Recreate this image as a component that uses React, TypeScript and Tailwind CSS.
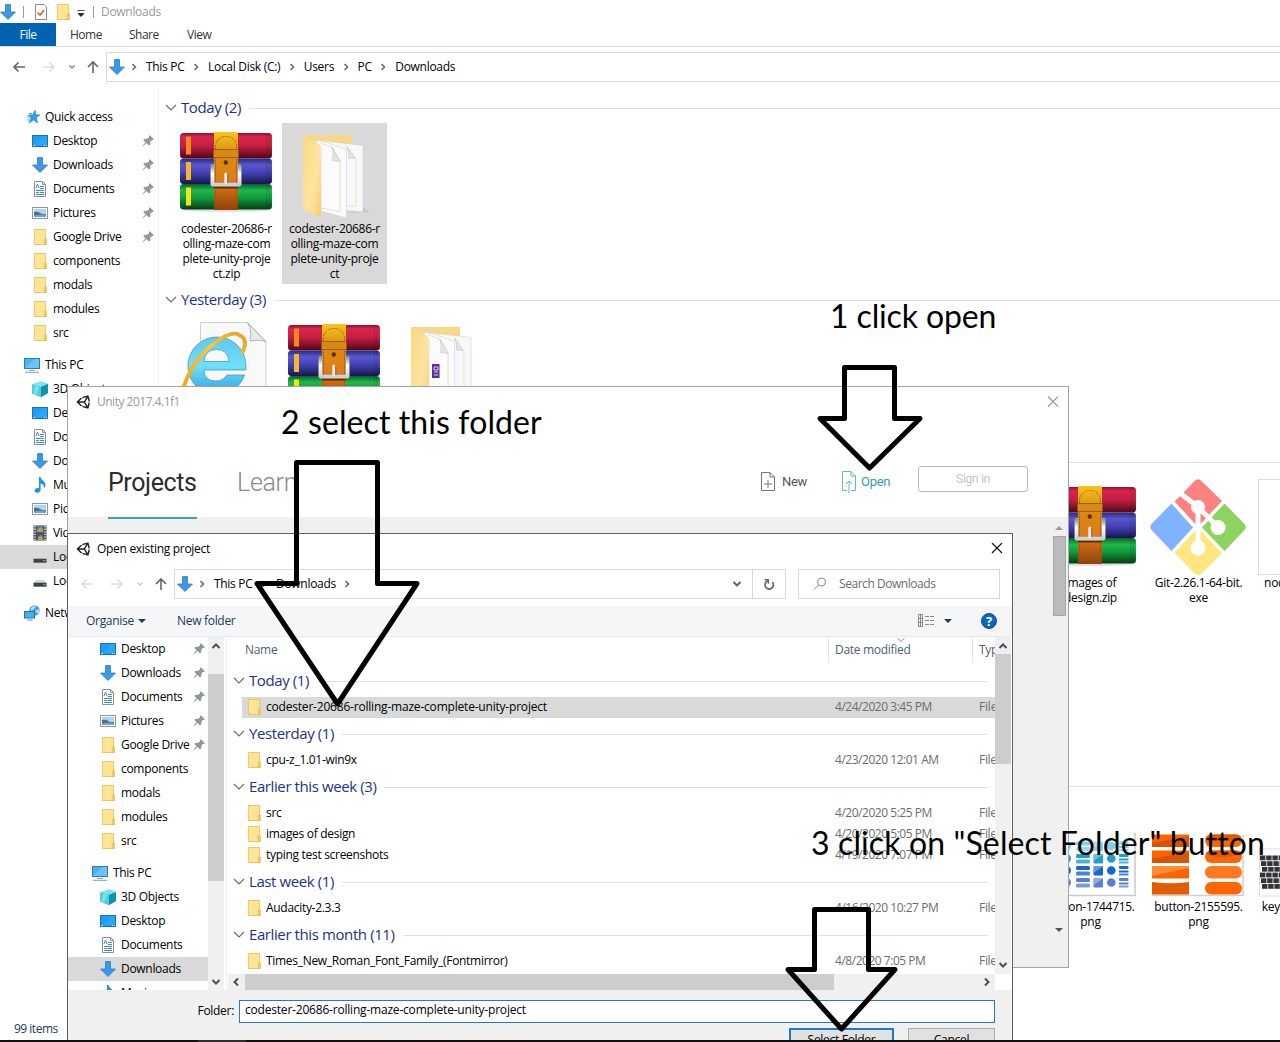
import React from "react";
import { FaUnity } from "react-icons/fa";

type IconName = "desktop" | "down" | "doc" | "pic" | "folder" | "pc" | "cube" | "music" | "video" | "drive" | "net" | "star";

function Icon({ name }: { name: IconName }) {
  const base = "block h-4 w-4 shrink-0";
  switch (name) {
    case "desktop":
      return (
        <svg className={base} viewBox="0 0 16 16">
          <rect x=".5" y="2.5" width="15" height="11" fill="#1e9bf5" stroke="#1873bd" />
          <path d="M1 13L11 3H15V12H1Z" fill="#35adff" opacity=".6" />
          <path d="M1.500 12.500H3M12 12.500h1M14 12.500h1" stroke="#d8efff" />
        </svg>
      );
    case "down":
      return (
        <svg className={base} viewBox="0 0 16 16">
          <path d="M5.500 .5h5v7.500h5L8 15.500.5 8h5Z" fill="#3b98e4" stroke="#2d7cc4" strokeWidth=".8" />
        </svg>
      );
    case "doc":
      return (
        <svg className={base} viewBox="0 0 16 16">
          <path d="M2.500 .5h8l3 3v12h-11Z" fill="#fff" stroke="#8b8f94" />
          <path d="M10.500 .5v3h3" fill="none" stroke="#8b8f94" />
          <path d="M4 7L5.500 3 7 7M8 5.500h4M8 7.500h4M4 9.500h8M4 11.500h3M8 11.500h4M4 13.500h8" stroke="#3c87c7" fill="none" />
        </svg>
      );
    case "pic":
      return (
        <svg className={base} viewBox="0 0 16 16">
          <rect x=".5" y="2.500" width="15" height="11" fill="#fff" stroke="#8f979e" />
          <rect x="2" y="4" width="12" height="8" fill="#a9d4f2" />
          <path d="M2 7q4-1 6 1t6 1v3H2Z" fill="#47708a" />
          <path d="M2 10.500q6-1.500 12 0V12H2Z" fill="#6fa9cf" />
        </svg>
      );
    case "folder":
      return (
        <svg className={base} viewBox="0 0 16 16">
          <path d="M2.400 .5h11.200v9.500h.6v5.500H2.400Z" fill="#fee596" stroke="#e6c35c" strokeWidth=".9" />
          <path d="M12.300 10.200h1.800v5.300h-1.800Z" fill="#fbd667" stroke="#dfb545" strokeWidth=".7" />
        </svg>
      );
    case "pc":
      return (
        <svg className={base} viewBox="0 0 16 16">
          <rect x=".5" y="1.500" width="15" height="10" fill="#49b2f3" stroke="#2d7cad" />
          <path d="M1 11L11 2h4v9Z" fill="#83cffc" opacity=".6" />
          <path d="M5 13.500h6" stroke="#9aabb5" />
          <path d="M1 15.300h14" stroke="#8d9aa3" />
        </svg>
      );
    case "cube":
      return (
        <svg className={base} viewBox="0 0 16 16">
          <path d="M0 3.500L9 .5l7 2.500v9l-7 4-9-3.500Z" fill="#2bb6cd" />
          <path d="M0 3.500L9 .5 16 3 9 6Z" fill="#83e4ee" />
          <path d="M0 3.500L9 6v10L0 12.500Z" fill="#4fd0de" />
          <path d="M9 6l7-3v9l-7 4Z" fill="#0c93ad" />
          <path d="M3 5l4 1-3 8-2-1Z" fill="#9cebf2" opacity=".6" />
        </svg>
      );
    case "music":
      return (
        <svg className={base} viewBox="0 0 16 16">
          <path d="M7 0h1.600c0 3 4.800 4 4.800 7.500 0 1.500-.6 3-1.500 4 .5-3-1.200-4.500-3.300-5V13c0 1.600-1.500 2.800-3.200 2.800S2.600 15 2.600 13.600s1.400-2.600 3-2.600c.6 0 1 .1 1.400.3Z" fill="#1c93df" />
        </svg>
      );
    case "video":
      return (
        <svg className={base} viewBox="0 0 16 16">
          <rect x="1.500" y=".5" width="13" height="15" fill="#444a50" />
          <path d="M3 1v14M13 1v14" stroke="#fff" strokeWidth="1.300" strokeDasharray="1.300 1.300" />
          <rect x="4.500" y="1" width="7" height="6.500" fill="#3f79c4" />
          <rect x="4.500" y="8.500" width="7" height="6.500" fill="#33599b" />
          <path d="M5 5l3-3 3 2v3H5ZM6 12l3-2 2 3v2H6Z" fill="#c69a33" />
        </svg>
      );
    case "drive":
      return (
        <svg className={base} viewBox="0 0 16 16">
          <path d="M4 7h8l2.500 3h-13Z" fill="#d6dadc" />
          <rect x="1.500" y="9.700" width="13" height="4" fill="#3c4347" />
          <rect x="11.500" y="11" width="1.700" height="1.200" fill="#5ce05b" />
        </svg>
      );
    case "net":
      return (
        <svg className={base} viewBox="0 0 16 16">
          <circle cx="10.500" cy="5.500" r="5.200" fill="#4d9fd4" />
          <path d="M7 3q3-3 5-2l-2 3-3 2ZM11 6l4-2q1 3-1 5Z" fill="#b8dcee" />
          <rect x=".5" y="6.500" width="10" height="6.500" fill="#45b1f3" stroke="#2372a5" />
          <path d="M3.500 15h5" stroke="#5f8fae" />
        </svg>
      );
    case "star":
      return (
        <svg className={base} viewBox="0 0 16 16">
          <path d="M11 1.200l.9 4.500 4 .2-3.500 2.700 1.100 5.300-3.900-3-4.500 3.200 1.900-5.300L4.500 6l4.300-.3Z" fill="#2da1ee" stroke="#1c7fc8" strokeWidth=".6" />
          <path d="M5 4.500h3M2.500 8h3.500M3 11h2.500" stroke="#4aaef0" />
        </svg>
      );
  }
}

function Pin() {
  return (
    <svg className="block h-3 w-3 shrink-0" viewBox="0 0 12 12">
      <path d="M7.500 0L12 4.300l-1.300.6-.5-.2-2 2.100.1 2.400-1.300 1.300L4.500 8 .8 11.600.3 11.200 3.600 7.200 1.300 4.900l1.400-1.200 2.300.2 2.200-2L7 1.200Z" fill="#8e979f" />
    </svg>
  );
}

type NavItem = { icon: IconName; label: string; pin?: boolean; root?: boolean; on?: boolean; gap?: boolean };

const mainNav: NavItem[] = [
  { icon: "star", label: "Quick access", root: true },
  { icon: "desktop", label: "Desktop", pin: true },
  { icon: "down", label: "Downloads", pin: true },
  { icon: "doc", label: "Documents", pin: true },
  { icon: "pic", label: "Pictures", pin: true },
  { icon: "folder", label: "Google Drive", pin: true },
  { icon: "folder", label: "components" },
  { icon: "folder", label: "modals" },
  { icon: "folder", label: "modules" },
  { icon: "folder", label: "src" },
  { icon: "pc", label: "This PC", root: true, gap: true },
  { icon: "cube", label: "3D Objects" },
  { icon: "desktop", label: "Desktop" },
  { icon: "doc", label: "Documents" },
  { icon: "down", label: "Downloads" },
  { icon: "music", label: "Music" },
  { icon: "pic", label: "Pictures" },
  { icon: "video", label: "Videos" },
  { icon: "drive", label: "Local Disk (C:)", on: true },
  { icon: "drive", label: "Local Disk (D:)" },
  { icon: "net", label: "Network", root: true, gap: true },
];

const dialogNav: NavItem[] = [
  ...mainNav.slice(1, 14),
  { icon: "down", label: "Downloads", on: true },
  { icon: "music", label: "Music" },
];

function Nav({ items, dialog }: { items: NavItem[]; dialog?: boolean }) {
  return (
    <div className="flex flex-col">
      {items.map((n, i) => (
        <div
          key={i}
          className={
            "flex h-6 shrink-0 items-center " +
            (n.gap ? "mt-2 " : "") +
            (n.on ? "bg-[#d9d9d9] " : "") +
            (dialog ? "pr-[3px] " : "pr-1 ") +
            (n.root ? "pl-6" : "pl-8")
          }
        >
          <Icon name={n.icon} />
          <span className="ml-[5px] flex-1 whitespace-nowrap">{n.label}</span>
          {n.pin && <Pin />}
        </div>
      ))}
    </div>
  );
}

function Chevron({ className, d = "M1 3l5 5 5-5", w = 1.2 }: { className: string; d?: string; w?: number }) {
  return (
    <svg className={"block h-3 w-3 shrink-0 " + className} viewBox="0 0 12 12" fill="none" stroke="currentColor" strokeWidth={w}>
      <path d={d} />
    </svg>
  );
}
const RIGHT = "M4.500 3l3 3-3 3";
const DOWN = "M2.500 4l3.500 3.500L9.500 4";
const UP = "M2.500 8L6 4.500 9.500 8";

function GroupHeader({ label, className }: { label: string; className: string }) {
  return (
    <div className={"flex shrink-0 items-center " + className}>
      <Chevron className="text-[#6d6d6d]" />
      <span className="ml-1 pb-0.5 text-[15px] leading-5 tracking-[-0.4px] whitespace-nowrap text-[#1e3287]">{label}</span>
      <span className="ml-[8px] h-px flex-1 bg-[#e2e2e2]" />
    </div>
  );
}

function WinRar() {
  const books = [
    { y: 8, c: "url(#wr-red)", s: "#f5871f" },
    { y: 33.500, c: "url(#wr-blue)", s: "#f5b52c" },
    { y: 59, c: "url(#wr-green)", s: "#f2e51c" },
  ];
  return (
    <svg className="block h-24 w-24" viewBox="0 0 96 96">
      <defs>
        <linearGradient id="wr-red" x2="0" y2="1">
          <stop offset="0" stopColor="#8d1230" /><stop offset=".15" stopColor="#d8264c" /><stop offset=".5" stopColor="#c41f43" /><stop offset="1" stopColor="#4f0717" />
        </linearGradient>
        <linearGradient id="wr-blue" x2="0" y2="1">
          <stop offset="0" stopColor="#2a2a78" /><stop offset=".25" stopColor="#5957cf" /><stop offset=".55" stopColor="#4442b5" /><stop offset="1" stopColor="#17164d" />
        </linearGradient>
        <linearGradient id="wr-green" x2="0" y2="1">
          <stop offset="0" stopColor="#0a6125" /><stop offset=".25" stopColor="#20b74d" /><stop offset=".55" stopColor="#119a3a" /><stop offset="1" stopColor="#033d13" />
        </linearGradient>
        <linearGradient id="wr-belt" x2="0" y2="1">
          <stop offset="0" stopColor="#f7c51e" /><stop offset=".28" stopColor="#d98d10" /><stop offset=".65" stopColor="#e07a16" /><stop offset="1" stopColor="#8e420a" />
        </linearGradient>
        <linearGradient id="wr-metal" x2="0" y2="1">
          <stop offset="0" stopColor="#9a9a9a" /><stop offset=".4" stopColor="#fff" /><stop offset="1" stopColor="#cfcfcf" />
        </linearGradient>
      </defs>
      <ellipse cx="48" cy="85" rx="44" ry="2" fill="#ccc" opacity=".6" />
      {books.map((b) => (
        <g key={b.y}>
          <rect x="2" y={b.y} width="92" height="25.500" rx="3.500" fill={b.c} />
          <rect x="8" y={b.y + 3.500} width="5" height="18" fill={b.s} />
          <path d={`M88.500 ${b.y + 1}v23M91 ${b.y + 1}v23`} stroke="#000" opacity=".15" />
        </g>
      ))}
      <rect x="36" y="7" width="24" height="78" rx="1" fill="url(#wr-belt)" />
      <path d="M37.500 84V20q2-8.500 10.500-8.500T58.500 20v64" fill="none" stroke="#8b4c0a" strokeWidth=".8" strokeDasharray="1.500 1" />
      <path d="M35.500 24.500h25v8h-25Z" fill="#d88913" stroke="#8e540c" strokeWidth=".8" />
      <path d="M36 62.500h24" stroke="#5f2903" strokeWidth="2" />
      <circle cx="47.800" cy="37.500" r="2.200" fill="#5d2b06" />
      <path d="M37 41h-2.500v18.500h27V41H59" fill="none" stroke="#888" strokeWidth="4.300" strokeLinejoin="round" />
      <path d="M37 41h-2.500v18.500h27V41H59" fill="none" stroke="url(#wr-metal)" strokeWidth="3.500" strokeLinejoin="round" />
      <path d="M47.800 49v9" stroke="#e9e9e9" strokeWidth="3" strokeLinecap="round" />
      <path d="M49.800 49v9" stroke="#6d5a4c" strokeWidth=".8" />
    </svg>
  );
}

function OpenFolder({ badge }: { badge?: boolean }) {
  return (
    <svg className="block h-24 w-24" viewBox="0 0 96 96">
      <defs>
        <linearGradient id="fd-cover" x2="1" y2="1">
          <stop offset="0" stopColor="#f9d984" /><stop offset=".6" stopColor="#ffe3a0" /><stop offset="1" stopColor="#f6cd6d" />
        </linearGradient>
      </defs>
      <path d="M60 88l24-1-6-4Z" fill="#b8b8b8" opacity=".5" />
      <path d="M17 10h49v60H34Z" fill="#f8d885" />
      <path d="M29 15L60 18.500l17 2V87l-20-2Z" fill="#f7f8f9" stroke="#d2d2d2" strokeWidth=".6" />
      <path d="M61 81h9V34" fill="none" stroke="#e8dfae" strokeWidth=".8" />
      <path d="M60.500 21q3 5 2 12l7 .5Z" fill="#e2e4e6" stroke="#bdbdbd" strokeWidth=".5" />
      <path d="M29 15l15 3.500 16.500 6V93L35 86V22Z" fill="#fafbfd" stroke="#cfd2d6" strokeWidth=".6" />
      <path d="M35 83l19 3.500V36L46 22 34 18" fill="none" stroke="#e8dc9c" strokeWidth=".8" />
      <path d="M46 22q2 6 .5 13.500l8 1Z" fill="#e2e4e6" stroke="#bdbdbd" strokeWidth=".5" />
      <path d="M17 10L33 20q2 1.500 2 4V65q-1 3 0 5V92L17 85Z" fill="url(#fd-cover)" />
      {badge && (
        <g>
          <rect x="38" y="47" width="7.500" height="14" fill="#59319a" />
          <path d="M40 50h4v3h-4ZM40 55h4M40 58h4" fill="none" stroke="#dccdf2" />
        </g>
      )}
    </svg>
  );
}

function IePage() {
  return (
    <svg className="block h-24 w-24" viewBox="0 0 96 96">
      <defs>
        <linearGradient id="ie-e" x2="0" y2="1">
          <stop offset="0" stopColor="#5fc7f0" /><stop offset=".5" stopColor="#6fe0fc" /><stop offset="1" stopColor="#2f9fdc" />
        </linearGradient>
        <linearGradient id="ie-ring" x2="1" y1="1" y2="0">
          <stop offset="0" stopColor="#f6a413" /><stop offset=".6" stopColor="#fbc53a" /><stop offset="1" stopColor="#e9a128" />
        </linearGradient>
      </defs>
      <path d="M22.500 5.500h47l18.500 19V94H22.500Z" fill="#f9f9f9" stroke="#cfcfcf" />
      <path d="M69.500 5.500q5 8 2.500 18.500 10-2 16 1Z" fill="#e9e9e9" stroke="#a4a4a4" strokeWidth=".8" />
      <path d="M38.500 20a29 29 0 1 0 28 38H49q-4 6-11 6-12 0-12-11h42v-4A29 29 0 0 0 38.500 20Zm-12.500 24.500q1-12 12.500-12t12.500 12Z" fill="url(#ie-e)" stroke="#3b9ccb" strokeWidth=".8" />
      <path d="M5 72Q14 44 34 28T62 18.500q9 4 2 17.500" fill="none" stroke="url(#ie-ring)" strokeWidth="4" />
    </svg>
  );
}

function GitLogo() {
  return (
    <svg className="block h-24 w-24" viewBox="0 0 96 96">
      <path d="M21.500 24.500L1.500 45q-2.500 3 0 6L21.500 72 43 48.500Z" fill="#80b3ff" />
      <path d="M35.500 11.500L44.500 2q3.500-3.500 7 0L72 22 51 44.500h-6L24.500 22.500Z" fill="#ff8080" />
      <path d="M74.500 24.500L94.500 45q2.500 3 0 6L74.500 72 52 48.500Z" fill="#8dd35f" />
      <path d="M24.500 73.500L45 52h6.500L72 74.500 51.500 94.500q-3.500 3-7 0Z" fill="#ffe680" />
      <path d="M30 14l18 14v38M48 28l20 20" fill="none" stroke="#fff" strokeWidth="5" />
      <circle cx="48" cy="28" r="7" fill="#fff" />
      <circle cx="68" cy="48.500" r="7.500" fill="#fff" />
      <circle cx="48" cy="69" r="7.500" fill="#fff" />
    </svg>
  );
}

function BlueButtons() {
  const rows = [
    { y: 34, c: "#7fd0e8" },
    { y: 46.500, c: "#1aa0cb" },
    { y: 58.500, c: "#1767cf" },
    { y: 70.500, c: "#5a7fd0" },
  ];
  return (
    <svg className="block h-24 w-24" viewBox="0 0 96 96">
      <rect x="1" y="28" width="92" height="64" fill="#fff" />
      <path d="M93 30v62M2 92.500h92" stroke="#c9c9c9" strokeWidth="1.500" />
      {rows.map((r) => (
        <g key={r.y} fill={r.c} transform="translate(0 7)">
          <circle cx="24.500" cy={r.y + 2} r="4.500" />
          <rect x="34" y={r.y - 2.500} width="14" height="4" rx="1.500" />
          <rect x="34" y={r.y + 3} width="14" height="4" rx="1.500" opacity=".8" />
          <rect x="51.500" y={r.y - 2.500} width="9.500" height="9.500" rx="1" />
          <path d={`M52 ${r.y + 4}l9-6v-.5h-9Z`} fill="#fff" opacity=".35" />
          <circle cx="69.300" cy={r.y + 2} r="4.300" />
          <rect x="77" y={r.y - 2.500} width="9.500" height="3" rx="1" />
          <rect x="77" y={r.y + 2} width="9.500" height="2" />
          <rect x="77" y={r.y + 5} width="9.500" height="2" opacity=".8" />
        </g>
      ))}
    </svg>
  );
}

function OrangeButtons() {
  return (
    <svg className="block h-24 w-24" viewBox="0 0 96 96">
      <rect x="1" y="31" width="92" height="62" fill="#fff" />
      <path d="M93 32v61M2 92.500h92" stroke="#d0d0d0" strokeWidth="1.500" />
      {[31.500, 47.500, 63, 79].map((y, i) => (
        <g key={y}>
          <rect x="2" y={y} width="37" height="12.500" fill={i === 3 ? "#e25c00" : "#fb6500"} />
          <path d={i < 2 ? `M2 ${y + 12.500}V${y + 8}L39 ${y + 2}v10.500Z` : i === 2 ? `M2 ${y}h37v2L2 ${y + 10}Z` : `M2 ${y}q18 2.500 37 0Z`} fill={i === 2 ? "#ff8a3a" : i === 3 ? "#fff" : "#d95400"} />
          <rect x="55" y={y} width="37" height="12.500" rx="6.200" fill={i === 2 ? "#ff7a22" : "#ff6500"} />
          {i < 2 && <path d={`M56 ${y + 4}q18 6 35-1-1-3-5-3H61q-4 0-5 4Z`} fill="#dd5800" />}
        </g>
      ))}
    </svg>
  );
}

function Keyboard() {
  return (
    <svg className="block h-24 w-24" viewBox="0 0 96 96">
      <rect x="1.500" y="46" width="93" height="47" fill="#fff" stroke="#ddd" />
      {[0, 1, 2, 3, 4, 5].map((r) =>
        [0, 1, 2, 3, 4, 5].map((c) => (
          <rect key={`${r}-${c}`} x={2 + c * 6.200 + (r % 3)} y={52.500 + r * 5.700} width="5.400" height="4.800" fill="#353338" />
        )),
      )}
    </svg>
  );
}

function Tile({ icon, lines, on, className = "" }: { icon: React.ReactNode; lines: string[]; on?: boolean; className?: string }) {
  return (
    <div className={"flex h-[161px] w-[105px] flex-col items-center pt-[2px] " + (on ? "bg-[#d9d9d9] " : "") + className}>
      <div className="mr-[2px]">{icon}</div>
      <div className="text-center leading-[15px] whitespace-nowrap">
        {lines.map((l) => (
          <div key={l}>{l}</div>
        ))}
      </div>
    </div>
  );
}

function UnityMark() {
  return <FaUnity className="block h-4 w-4 shrink-0 text-[#222]" />;
}

function NavArrow({ dir, className }: { dir: "left" | "right" | "up"; className: string }) {
  const d = dir === "left" ? "M13 7H2M6.500 2.500L2 7l4.500 4.500" : dir === "right" ? "M1 7h11M7.500 2.500L12 7l-4.500 4.500" : "M7 13V2M2 7l5-5 5 5";
  return (
    <svg className={"block h-3.5 w-3.5 shrink-0 " + className} viewBox="0 0 14 14" fill="none" stroke="currentColor" strokeWidth="1.600">
      <path d={d} />
    </svg>
  );
}

function Crumbs({ items, tail }: { items: string[]; tail?: boolean }) {
  return (
    <>
      {items.map((c, i) => (
        <React.Fragment key={c}>
          <Chevron className={"mr-[6px] text-[#666] " + (i === 0 ? "ml-[3px]" : "ml-[5.5px]")} d={RIGHT} w={1.500} />
          <span className="whitespace-nowrap">{c}</span>
        </React.Fragment>
      ))}
      {tail && <Chevron className="mx-[5px] text-[#666]" d={RIGHT} w={1.500} />}
    </>
  );
}

function Explorer() {
  return (
    <div className="flex h-[1040px] w-[1280px] flex-col bg-white">
      <div className="flex h-[23px] shrink-0 items-center text-[#999]">
        <Icon name="down" />
        <span className="ml-[7px] h-3 w-px bg-[#999]" />
        <svg className="ml-[9px] h-4 w-4" viewBox="0 0 16 16">
          <path d="M2.500 .5h8.500l2.500 2.500v12.500h-11Z" fill="#fff" stroke="#8b8b8b" />
          <path d="M4.500 8.500l2.500 2.500 4-5" fill="none" stroke="#e0602c" strokeWidth="1.600" />
        </svg>
        <span className="ml-1.5"><Icon name="folder" /></span>
        <svg className="ml-1 h-3 w-3" viewBox="0 0 12 12">
          <path d="M2.500 4.500h7M3 7.500h6L6 10.500Z" fill="#222" stroke="#222" strokeWidth=".8" />
        </svg>
        <span className="ml-1.5 h-3 w-px bg-[#999]" />
        <span className="ml-[7px] text-[#999]">Downloads</span>
      </div>
      <div className="flex h-6 shrink-0 items-center border-b border-[#dadbdc] tracking-[-0.5px] text-[#333]">
        <div className="flex h-[23px] w-14 items-center justify-center bg-[#0063b1] pt-px text-white">File</div>
        <span className="ml-3.5 w-[59px] pt-px">Home</span>
        <span className="w-[58px] pt-px">Share</span>
        <span className="pt-px">View</span>
      </div>
      <div className="flex h-[41px] shrink-0 items-center pb-0.5 pl-3">
        <NavArrow dir="left" className="text-[#666]" />
        <NavArrow dir="right" className="ml-4 text-[#ddd]" />
        <Chevron className="ml-2.5 text-[#888]" d="M3.500 4.500L6 7l2.500-2.500" w={1.500} />
        <NavArrow dir="up" className="ml-2 text-[#666]" />
        <div className="ml-1.5 flex h-[30px] flex-1 items-center border border-r-0 border-[#d9d9d9] pl-0.5">
          <Icon name="down" />
          <Crumbs items={["This PC", "Local Disk (C:)", "Users", "PC", "Downloads"]} />
        </div>
      </div>
      <div className="flex h-[952px]">
        <div className="flex w-[159px] shrink-0 flex-col border-r border-[#f3f3f3] pt-[17px]">
          <Nav items={mainNav} />
          <div className="mt-auto flex h-[22px] items-center pl-3.5 tracking-[-0.5px] text-[#1e395b]">99 items</div>
        </div>
        <div className="flex min-w-0 flex-1 flex-col overflow-hidden">
          <GroupHeader label="Today (2)" className="mt-[5px] h-[30px] pl-1.5" />
          <div className="flex gap-[3px] pl-[15px]">
            <Tile icon={<WinRar />} lines={["codester-20686-r", "olling-maze-com", "plete-unity-proje", "ct.zip"]} />
            <Tile on icon={<OpenFolder />} lines={["codester-20686-r", "olling-maze-com", "plete-unity-proje", "ct"]} />
          </div>
          <GroupHeader label="Yesterday (3)" className="mt-px h-[30px] pl-1.5" />
          <div className="flex gap-[3px] pl-[15px]">
            <Tile icon={<IePage />} lines={[]} />
            <Tile icon={<WinRar />} lines={[]} />
            <Tile icon={<OpenFolder badge />} lines={[]} />
          </div>
          <div className="mt-[-14px] h-px shrink-0 bg-[#e2e2e2]" />
          <div className="mt-[14px] grid w-[1300px] shrink-0 grid-cols-[repeat(12,105px)] gap-[3px] pl-[15px]">
            <Tile className="col-start-9" icon={<WinRar />} lines={["images of", "design.zip"]} />
            <Tile icon={<GitLogo />} lines={["Git-2.26.1-64-bit.", "exe"]} />
            <Tile icon={<div className="h-24 w-24 border border-[#dcdcdc] bg-white" />} lines={["node-v12.16.2-x", "64.msi"]} />
          </div>
          <div className="mt-[148px] h-px shrink-0 bg-[#e2e2e2]" />
          <div className="mt-[14px] grid w-[1300px] shrink-0 grid-cols-[repeat(12,105px)] gap-[3px] pl-[15px]">
            <Tile className="col-start-9" icon={<BlueButtons />} lines={["button-1744715.", "png"]} />
            <Tile icon={<OrangeButtons />} lines={["button-2155595.", "png"]} />
            <Tile icon={<Keyboard />} lines={["keyboard-69866.", "png"]} />
          </div>
        </div>
      </div>
    </div>
  );
}

function UnityWindow() {
  return (
    <div className="absolute top-[386px] left-[67px] flex h-[582px] w-[1002px] flex-col border border-[#a3a3a3] bg-white">
      <div className="flex h-[30px] shrink-0 items-center pr-[9px] pl-2 text-[#999]">
        <UnityMark />
        <span className="ml-[5px] flex-1 tracking-[-0.5px]">Unity 2017.4.1f1</span>
        <svg className="h-3 w-3" viewBox="0 0 12 12" stroke="#999" strokeWidth="1.100">
          <path d="M1 .5l10 10M11 .5L1 10.500" />
        </svg>
      </div>
      <div className="relative z-10 flex h-[102px] shrink-0 items-end pl-10 font-['Roboto']">
        <div className="h-[72px] w-[89px] border-b-2 border-[#3ba3b3] pt-5 text-[25px] leading-8 tracking-[-0.4px] text-[#2b2b2b]">Projects</div>
        <div className="ml-10 h-[72px] w-[520px] pt-5 text-[25px] leading-8 font-light text-[#8a8a8a]">Learn</div>
        <div className="flex h-[61px] items-start text-[13px] text-[#555]">
          <div className="ml-[3px] flex h-12 items-center">
            <svg className="h-[22px] w-4" viewBox="0 0 16 22" fill="none" stroke="#777" strokeWidth="1">
              <path d="M1.500 1.500h8.500l4.500 4.500v13.500h-13ZM10 1.500V6h4.500M8 9v8M4 13h8" />
            </svg>
            <span className="ml-1.5 w-[24px] tracking-[-0.3px]">New</span>
          </div>
          <div className="ml-[35px] flex h-12 items-center text-[#2f9db0]">
            <svg className="h-[22px] w-4" viewBox="0 0 16 22" fill="none" stroke="#66b7c4" strokeWidth="1">
              <path d="M6 19.500H1.500V.5H10L14.500 5v14.500H10M10 .5V5h4.500M8 22V10M5 13l3-3 3 3" />
            </svg>
            <span className="ml-1 w-[31px] tracking-[-0.3px]">Open</span>
          </div>
          <div className="mt-2 ml-[26px] flex h-[26px] w-[110px] items-center justify-center rounded-[3px] border border-[#b9b9b9] text-xs text-[#c4c4c4]">Sign in</div>
        </div>
      </div>
      <div className="mt-[-2px] flex flex-1 justify-end bg-[#f0f0f0] pr-0.5">
        <div className="flex w-[14px] flex-col items-center pt-2">
          <svg className="h-1.5 w-2" viewBox="0 0 8 6"><path d="M0 5l4-4 4 4Z" fill="#999" /></svg>
          <div className="mt-[5px] h-[80px] w-[13px] border border-[#a5a5a5] bg-[#bbb]" />
          <svg className="mt-auto mb-[34px] h-1.5 w-2" viewBox="0 0 8 6"><path d="M0 1l4 4 4-4Z" fill="#555" /></svg>
        </div>
      </div>
    </div>
  );
}

const groups: { label: string; rows: { name: string; date: string; on?: boolean }[] }[] = [
  { label: "Today (1)", rows: [{ name: "codester-20686-rolling-maze-complete-unity-project", date: "4/24/2020 3:45 PM", on: true }] },
  { label: "Yesterday (1)", rows: [{ name: "cpu-z_1.01-win9x", date: "4/23/2020 12:01 AM" }] },
  {
    label: "Earlier this week (3)",
    rows: [
      { name: "src", date: "4/20/2020 5:25 PM" },
      { name: "images of design", date: "4/20/2020 5:05 PM" },
      { name: "typing test screenshots", date: "4/19/2020 7:07 PM" },
    ],
  },
  { label: "Last week (1)", rows: [{ name: "Audacity-2.3.3", date: "4/16/2020 10:27 PM" }] },
  { label: "Earlier this month (11)", rows: [{ name: "Times_New_Roman_Font_Family_(Fontmirror)", date: "4/8/2020 7:05 PM" }] },
];

function Dialog() {
  return (
    <div className="absolute top-[533px] left-[67px] flex h-[560px] w-[946px] flex-col border border-[#5f5f5f] bg-white">
      <div className="flex h-[30px] shrink-0 items-center pr-[9px] pl-2">
        <UnityMark />
        <span className="ml-[5px] flex-1">Open existing project</span>
        <svg className="h-3 w-3" viewBox="0 0 12 12" stroke="#111" strokeWidth="1.200">
          <path d="M1 0l10 10M11 0L1 10" />
        </svg>
      </div>
      <div className="flex h-[42px] shrink-0 items-center pr-3 pb-0.5 pl-3">
        <NavArrow dir="left" className="text-[#ddd]" />
        <NavArrow dir="right" className="ml-4 text-[#ddd]" />
        <Chevron className="ml-2.5 text-[#ccc]" d="M3.500 4.500L6 7l2.500-2.500" w={1.500} />
        <NavArrow dir="up" className="ml-2 text-[#666]" />
        <div className="ml-1.5 flex h-[30px] w-[579px] items-center border border-[#d9d9d9] pl-0.5">
          <Icon name="down" />
          <Crumbs items={["This PC", "Downloads"]} tail />
          <Chevron className="mr-[9px] ml-auto text-[#666]" d={DOWN} w={2} />
        </div>
        <div className="flex h-[30px] w-[33px] items-center justify-center border border-l-0 border-[#d9d9d9]">
          <svg className="h-3 w-3" viewBox="0 0 12 12" fill="none" stroke="#666" strokeWidth="1.700">
            <path d="M9.300 4A4.200 4.200 0 1 1 5 2.800" />
            <path d="M1.500 1.800H5.300V5.800" strokeWidth="1.500" />
          </svg>
        </div>
        <div className="ml-auto flex h-[30px] w-[202px] items-center border border-[#d9d9d9] pl-3.5 tracking-[-0.45px] text-[#6d6d6d]">
          <svg className="mr-3 h-3.5 w-3.5" viewBox="0 0 14 14" fill="none" stroke="#888">
            <circle cx="8.500" cy="5" r="4" />
            <path d="M5.500 8L.8 12.800" />
          </svg>
          Search Downloads
        </div>
      </div>
      <div className="flex h-[31px] shrink-0 items-center border-b border-[#e8e9ea] bg-[#f5f6f7] pr-[15px] pl-[18px] text-[#1e395b]">
        <span className="w-[52px]">Organise</span>
        <svg className="h-1.5 w-2" viewBox="0 0 8 5"><path d="M0 .5h8l-4 4Z" fill="#1e395b" /></svg>
        <span className="ml-[31px]">New folder</span>
        <svg className="ml-auto h-3.5 w-4" viewBox="0 0 16 14" fill="none" stroke="#888">
          <path d="M.5 .5h4v12h-4ZM.5 4.500h4M.5 8.500h4M2.500 0v13" />
          <path d="M7 2.500h4M12 2.500h4M7 6.500h4M12 6.500h4M7 10.500h4M12 10.500h4" />
        </svg>
        <svg className="ml-[10px] h-1.5 w-2" viewBox="0 0 8 5"><path d="M0 .5h8l-4 4Z" fill="#1e395b" /></svg>
        <div className="ml-[29px] flex h-4 w-4 items-center justify-center rounded-full border border-[#0b4f91] bg-[#0a66c2] text-[13px] leading-4 font-bold text-white">?</div>
      </div>
      <div className="flex h-[353px] shrink-0 overflow-hidden">
        <div className="w-[140px] shrink-0 overflow-hidden">
          <Nav items={dialogNav} dialog />
        </div>
        <div className="flex w-4 shrink-0 flex-col items-center bg-[#f0f0f0] pt-[3px]">
          <Chevron className="text-[#505050]" d={UP} w={2} />
          <div className="mt-[22px] h-[207px] w-full bg-[#cdcdcd]" />
          <Chevron className="mt-auto mb-[2px] text-[#505050]" d={DOWN} w={2} />
        </div>
        <div className="mr-px ml-[2px] w-px shrink-0 bg-[#f0f0f0]" />
        <div className="flex min-w-0 flex-1 flex-col">
          <div className="flex h-[337px]">
            <div className="flex w-[767px] shrink-0 flex-col overflow-hidden">
              <div className="flex h-[28px] shrink-0 text-[#4c607a]">
                <div className="h-[26px] w-[601px] shrink-0 border-r border-[#e5e5e5] pt-[5px] pl-[17px]">Name</div>
                <div className="relative h-[26px] w-36 shrink-0 border-r border-[#e5e5e5] pt-[5px] pl-1.5">
                  Date modified
                  <svg className="absolute top-0 left-[68px] h-1.5 w-2" viewBox="0 0 8 6" fill="none" stroke="#888"><path d="M.5 1L4 4.500 7.500 1" /></svg>
                </div>
                <div className="pt-[5px] pl-1.5">Type</div>
              </div>
              {groups.map((g) => (
                <div key={g.label}>
                  <GroupHeader label={g.label} className="h-8 pr-[7px] pl-[5px]" />
                  {g.rows.map((r) => (
                    <div key={r.name} className={"ml-3.5 flex h-[21px] items-center pb-0.5 pl-1 " + (r.on ? "bg-[#d9d9d9] tracking-[-0.2px]" : "")}>
                      <Icon name="folder" />
                      <span className="ml-1 w-[569px] shrink-0 whitespace-nowrap">{r.name}</span>
                      <span className="w-36 shrink-0 tracking-[-0.47px] whitespace-nowrap text-[#6d6d6d]">{r.date}</span>
                      <span className="whitespace-nowrap text-[#6d6d6d]">File folder</span>
                    </div>
                  ))}
                </div>
              ))}
            </div>
            <div className="flex w-4 shrink-0 flex-col items-center bg-[#f0f0f0] pt-[3px]">
              <Chevron className="text-[#505050]" d={UP} w={2} />
              <div className="mt-[2px] h-[110px] w-full bg-[#cdcdcd]" />
              <Chevron className="mt-auto mb-[3px] text-[#505050]" d={DOWN} w={2} />
            </div>
          </div>
          <div className="flex h-4 w-[767px] items-center bg-[#f0f0f0]">
            <Chevron className="ml-0.5 text-[#505050]" d="M8 2.500L4.500 6 8 9.500" w={2} />
            <div className="ml-[3px] h-full w-[589px] bg-[#cdcdcd]" />
            <Chevron className="mr-[2px] ml-auto text-[#505050]" d="M4 2.500L7.500 6 4 9.500" w={2} />
          </div>
        </div>
      </div>
      <div className="flex flex-1 flex-col bg-[#f0f0f0] pt-[9px] pr-[17px]">
        <div className="flex h-6 items-center justify-end">
          <span className="mr-[5px]">Folder:</span>
          <div className="flex h-[23px] w-[756px] items-center border border-[#2a7ab5] bg-white pb-0.5 pl-[5px] tracking-[-0.2px]">codester-20686-rolling-maze-complete-unity-project</div>
        </div>
        <div className="mt-[5px] flex justify-end gap-3.5">
          <div className="flex h-[23px] w-[105px] items-center justify-center border-2 border-[#1979ca] bg-[#e1e1e1]">Select Folder</div>
          <div className="flex h-[23px] w-[87px] items-center justify-center border border-[#adadad] bg-[#e1e1e1]">Cancel</div>
        </div>
      </div>
    </div>
  );
}

function Annotations() {
  return (
    <div className="absolute inset-0 z-20 font-['Lato'] text-[32px] leading-10 whitespace-nowrap text-black">
      <svg className="absolute inset-0 h-[1040px] w-[1280px]" viewBox="0 0 1280 1040" fill="none" stroke="#000" strokeWidth="5" strokeLinejoin="round">
        <path d="M844.500 367.500h50v51h25.500L869.500 468 820 418.500h24.500Z" />
        <path d="M296.500 462.500h81v121H417L337.500 704 257 583.500h39.500Z" />
        <path d="M814.500 909.500h54v60H895L841.500 1029 788 969.500h26.500Z" />
      </svg>
      <div className="absolute top-[296px] left-[830px] tracking-[-0.13px]">1 click open</div>
      <div className="absolute top-[402px] left-[281px] tracking-[0.1px]">2 select this folder</div>
      <div className="absolute top-[823px] left-[811px] tracking-[0.12px]">3 click on "Select Folder" button</div>
    </div>
  );
}

export default function App() {
  return (
    <div className="relative h-[1042px] w-[1280px] overflow-hidden bg-[#111] font-['Open_Sans','Noto_Sans',sans-serif] text-[12px] leading-4 tracking-[-0.3px] text-black">
      <div className="relative h-[1040px] w-[1280px] overflow-hidden">
        <Explorer />
        <UnityWindow />
        <Dialog />
        <Annotations />
      </div>
      <div className="ml-[198px] h-0.5 w-12 bg-[#2e2e2e]" />
    </div>
  );
}
